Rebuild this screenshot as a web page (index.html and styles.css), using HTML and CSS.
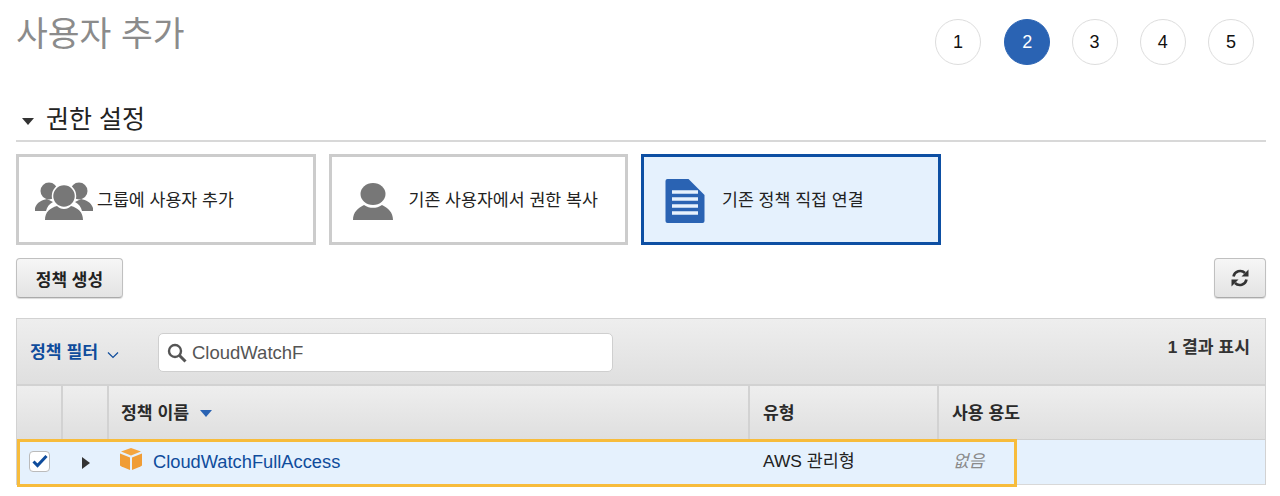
FILE: index.html
```html
<!DOCTYPE html>
<html lang="ko">
<head>
<meta charset="utf-8">
<title>사용자 추가</title>
<link rel="stylesheet" href="styles.css">
</head>
<body>
<header class="top">
  <h1 class="title">사용자 추가</h1>
  <ol class="steps">
    <li class="step">1</li>
    <li class="step active">2</li>
    <li class="step">3</li>
    <li class="step">4</li>
    <li class="step">5</li>
  </ol>
</header>
<h2 class="section"><span class="caret"></span>권한 설정</h2>
<div class="cards">
  <div class="card">
    <svg class="ic-group" width="60" height="40" viewBox="0 0 60 40"><g fill="#777"><circle cx="15" cy="10" r="8.5"/><circle cx="45" cy="10" r="8.5"/><path d="M1 27c2-6 7-8 12-9l6 3c-4 2-6 5-7 9H1z"/><path d="M59 27c-2-6-7-8-12-9l-6 3c4 2 6 5 7 9h11z"/></g><circle cx="30" cy="15" r="11.5" fill="#777" stroke="#fff" stroke-width="1.5"/><path d="M11 39c0-8 5-12 12-14 2 2 4 3 7 3s5-1 7-3c7 2 12 6 12 14z" fill="#777"/></svg>
    <span>그룹에 사용자 추가</span>
  </div>
  <div class="card">
    <svg class="ic-user" width="40" height="37" viewBox="0 0 40 37"><ellipse cx="20" cy="11" rx="12.500" ry="11" fill="#777"/><path d="M0 37c0-8 5-12 11-15 3 2 6 2.800 9 2.800s6-.8 9-2.800c6 3 11 7 11 15z" fill="#777"/></svg>
    <span>기존 사용자에서 권한 복사</span>
  </div>
  <div class="card selected">
    <svg class="ic-doc" width="40" height="44" viewBox="0 0 40 44"><path d="M2 0h21l16 16v26a2 2 0 0 1-2 2H2a2 2 0 0 1-2-2V2a2 2 0 0 1 2-2z" fill="#2a63b3" transform="translate(.5 0)"/><path d="M7 13h26M7 20h26M7 27h26M7 34h26" stroke="#e6f1fd" stroke-width="3.500"/></svg>
    <span>기존 정책 직접 연결</span>
  </div>
</div>
<div class="actions">
  <button class="btn btn-create">정책 생성</button>
  <button class="btn btn-refresh" aria-label="새로 고침">
    <svg width="20" height="20" viewBox="0 0 20 20" fill="none"><path d="M3.500 8.500A6.800 6.800 0 0 1 15 5" stroke="#333" stroke-width="2.600"/><path d="M18.500 1.500v7h-7z" fill="#333"/><path d="M16.500 11.500A6.800 6.800 0 0 1 5 15" stroke="#333" stroke-width="2.600"/><path d="M1.500 18.500v-7h7z" fill="#333"/></svg>
  </button>
</div>
<section class="table">
  <div class="filterbar">
    <a class="filter">정책 필터<svg class="chev" width="12" height="8" viewBox="0 0 12 8" fill="none"><path d="M1 1.500l5 5 5-5" stroke="#0f4c9c" stroke-width="1.200"/></svg></a>
    <div class="search">
      <svg width="20" height="20" viewBox="0 0 20 20" fill="none"><circle cx="8" cy="8" r="6" stroke="#555" stroke-width="2.400"/><path d="M12.500 12.500l6 6" stroke="#555" stroke-width="3"/></svg>
      <span>CloudWatchF</span>
    </div>
    <div class="count">1 결과 표시</div>
  </div>
  <div class="grid head">
    <div class="cell"></div>
    <div class="cell"></div>
    <div class="cell th first">정책 이름<span class="sort"></span></div>
    <div class="cell th">유형</div>
    <div class="cell th last">사용 용도</div>
  </div>
  <div class="grid row">
    <div class="cell cell-check"><span class="check"><svg width="16" height="14" viewBox="0 0 16 14" fill="none"><path d="M1.500 7.500l4 4 9-9.500" stroke="#0f4c9c" stroke-width="3"/></svg></span></div>
    <div class="cell cell-expand"><span class="expand"></span></div>
    <div class="cell name">
      <svg class="box" width="22" height="22" viewBox="0 0 22 22"><path d="M11 0l10 3.500L11 7.500 1 3.500z" fill="#f4a53f"/><path d="M0 5.500l10 4V22L1.500 18.500 0 17.500z" fill="#f09d36"/><path d="M22 5.500l-10 4V22l8.500-3.500 1.500-1z" fill="#f09d36"/></svg>
      <a>CloudWatchFullAccess</a>
    </div>
    <div class="cell type">AWS 관리형</div>
    <div class="cell usage">없음</div>
  </div>
  <div class="highlight"></div>
</section>
</body>
</html>
```

FILE: styles.css
```css
* { box-sizing: border-box; }
html, body { margin: 0; padding: 0; }
body {
  width: 1280px;
  height: 496px;
  overflow: hidden;
  padding: 0 14px 0 16px;
  background: #fff;
  color: #1a1a1a;
  font-family: "Liberation Sans", "Noto Sans CJK KR", sans-serif;
}
.top {
  display: flex;
  justify-content: space-between;
  height: 104px;
}
.title {
  margin: 0;
  padding-top: 9px;
  font-size: 34.600px;
  line-height: 50px;
  font-weight: 400;
  color: #8b8b8b;
}
.steps {
  list-style: none;
  display: flex;
  gap: 22.250px;
  margin: 19px 12px 0 0;
  padding: 0;
}
.step {
  width: 46px;
  height: 46px;
  border: 1px solid #ddd;
  border-radius: 50%;
  display: flex;
  align-items: center;
  justify-content: center;
  font-size: 18px;
  color: #111;
}
.step.active {
  margin: 0 -1px 0 1px;
  background: #2a63b3;
  border-color: #2a63b3;
  color: #fff;
}
.section {
  display: flex;
  align-items: center;
  margin: 0;
  height: 38px;
  padding-bottom: 6px;
  border-bottom: 2px solid #d8d8d8;
  font-size: 25px;
  line-height: 30px;
  font-weight: 400;
  color: #222;
}
.caret {
  width: 0;
  height: 0;
  margin: 4px 12px 0 6px;
  border-left: 6.500px solid transparent;
  border-right: 6.500px solid transparent;
  border-top: 7px solid #333;
}
.cards {
  display: flex;
  gap: 13px;
  margin-top: 12px;
}
.card {
  width: 299.500px;
  height: 91px;
  border: 3px solid #ccc;
  display: flex;
  align-items: center;
  font-size: 17.300px;
  color: #222;
  background: #fff;
}
.card span { margin-top: -2px; }
.card.selected {
  background: #e5f1fd;
  border-color: #0d4fa3;
}
.ic-group { margin: 2px 3px 0 15px; flex: none; }
.ic-user { margin: 3px 16px 0 21px; flex: none; }
.ic-doc { margin: 2px 17px 0 21px; flex: none; }
.actions {
  display: flex;
  justify-content: space-between;
  margin-top: 13px;
}
.btn {
  height: 40px;
  padding: 0;
  border: 1px solid #c0c0c0;
  border-bottom-color: #aaa;
  border-radius: 4px;
  background: linear-gradient(#f6f6f6, #e3e3e3);
  box-shadow: 0 1px 1px rgba(0,0,0,.15);
  font-family: inherit;
  font-size: 17px;
  font-weight: 700;
  color: #222;
  display: flex;
  align-items: center;
  justify-content: center;
}
.btn-create { width: 107px; }
.btn-refresh { width: 52px; }
.table {
  position: relative;
  margin-top: 20px;
  border: 1px solid #d2d2d2;
  border-bottom: 0;
}
.filterbar {
  height: 67px;
  display: flex;
  align-items: flex-start;
  background: linear-gradient(#eeeeee, #dfdfdf);
  border-bottom: 2px solid #d2d2d2;
}
.filter {
  display: flex;
  align-items: center;
  margin: 21px 0 0 13px;
  width: 128px;
  font-size: 17.200px;
  line-height: 24px;
  font-weight: 700;
  color: #0f4c9c;
}
.chev { margin-left: 9px; margin-top: 5px; }
.search {
  display: flex;
  align-items: center;
  gap: 5px;
  width: 455px;
  height: 39px;
  margin-top: 14px;
  padding-left: 8px;
  background: #fff;
  border: 1px solid #cfcfcf;
  border-radius: 5px;
  font-size: 18.500px;
  color: #555;
}
.count {
  margin: 16px 15px 0 auto;
  font-size: 17.200px;
  line-height: 24px;
  font-weight: 700;
  color: #333;
}
.grid {
  display: grid;
  grid-template-columns: 46px 46px 641px 189px 1fr;
}
.head {
  height: 54px;
  background: linear-gradient(#eeeeee, #dfdfdf);
  border-bottom: 1px solid #cfcfcf;
}
.head .cell { border-right: 2px solid #d2d2d2; }
.head .cell.last { border-right: 0; }
.th {
  display: flex;
  align-items: center;
  padding: 0 0 2px 13px;
  font-size: 17.200px;
  font-weight: 700;
  color: #2a2a2a;
}
.th.first { padding-left: 12px; }
.sort {
  width: 0;
  height: 0;
  margin-left: 11px;
  margin-top: 3px;
  border-left: 6.500px solid transparent;
  border-right: 6.500px solid transparent;
  border-top: 7px solid #2a63b3;
}
.row {
  height: 45px;
  background: #e5f1fd;
  border-bottom: 1px solid #d8d8d8;
}
.row .cell { display: flex; align-items: center; }
.cell-check { padding: 0 0 2px 12px; }
.check {
  width: 21px;
  height: 21px;
  border: 1px solid #bbb;
  border-radius: 4px;
  background: #fff;
  display: flex;
  align-items: center;
  justify-content: center;
}
.cell-expand { padding: 0 0 2px 19px; }
.expand {
  width: 0;
  height: 0;
  margin-top: 3px;
  border-top: 6px solid transparent;
  border-bottom: 6px solid transparent;
  border-left: 8px solid #333;
}
.name {
  padding-left: 11px;
  font-size: 18.300px;
  color: #0f4c9c;
}
.box { margin: -7px 11px 0 0; flex: none; }
.type {
  padding: 0 0 5px 13px;
  font-size: 17.400px;
  color: #222;
}
.usage {
  padding: 0 0 5px 14px;
  font-size: 17px;
  font-style: italic;
  color: #8a8a8a;
}
.highlight {
  position: absolute;
  left: 0;
  top: 120px;
  width: 1000px;
  height: 48px;
  border: 3px solid #f7bc3c;
  pointer-events: none;
}
```
